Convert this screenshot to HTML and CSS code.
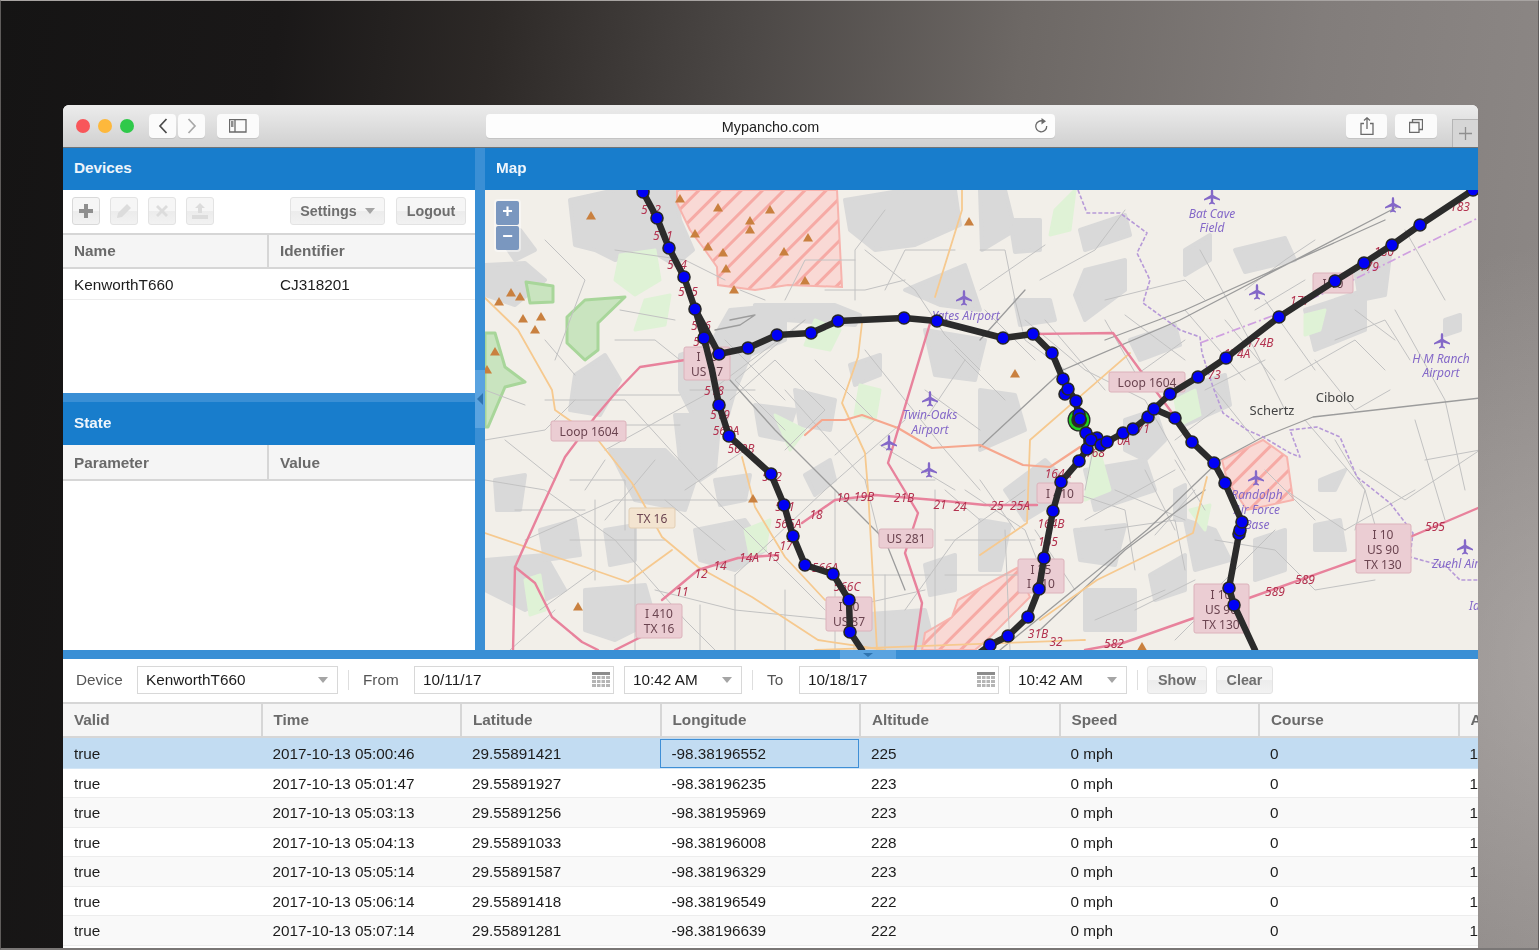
FILE: index.html
```html
<!DOCTYPE html>
<html lang="en">
<head>
<meta charset="utf-8">
<title>Mypancho.com</title>
<link rel="stylesheet" href="styles.css">
</head>
<body>
<div class="window">
  <header class="chrome">
    <div class="lights"><span class="light red"></span><span class="light yellow"></span><span class="light green"></span></div>
    <div class="nav-pair">
      <span class="cbtn nav"><svg width="12" height="18" viewBox="0 0 12 18"><path class="ico-dark" d="M9.500 2L3 9l6.500 7"/></svg></span>
      <span class="cbtn nav"><svg width="12" height="18" viewBox="0 0 12 18"><path class="ico-light" d="M2.500 2L9 9l-6.500 7"/></svg></span>
    </div>
    <span class="cbtn sidebar"><svg width="18" height="14" viewBox="0 0 18 14"><path class="ico-thin" d="M.5.5h16.500v12.500H.5zM6 .5v12.500M2 3h2.500M2 5h2.500M2 7h2.500"/></svg></span>
    <div class="url"><span class="url-text">Mypancho.com</span>
      <svg class="reload" width="14" height="16" viewBox="0 0 14 16"><path class="ico-thin" d="M9.500 3.300A5.500 5.500 0 1 0 12.700 8"/><path class="ico-fill" d="M7.500 0l4.500 3.300-4.500 3.200z"/></svg>
    </div>
    <span class="cbtn share"><svg width="14" height="18" viewBox="0 0 14 18"><path class="ico-thin" d="M4 6.500H1v11h12v-11h-3M7 12V1M4 3.500L7 .8l3 2.700"/></svg></span>
    <span class="cbtn tabs"><svg width="14" height="14" viewBox="0 0 14 14"><path class="ico-thin" d="M.5 3.500h9.500v10H.5zM3.500 3.500V.5h10v10H10"/></svg></span>
    <span class="newtab"><svg width="13" height="13" viewBox="0 0 13 13"><path class="ico-plus" d="M6.500 0v13M0 6.500h13"/></svg></span>
  </header>

  <div class="upper">
    <aside class="left">
      <section class="devices">
        <h2 class="panel-title">Devices</h2>
        <div class="dev-toolbar">
          <span class="tbtn on"><svg width="18" height="18" viewBox="0 0 18 18"><path class="g-solid" d="M7 2h4v5h5v4h-5v5H7v-5H2V7h5z"/></svg></span>
          <span class="tbtn off"><svg width="18" height="18" viewBox="0 0 18 18"><path class="g-faint" d="M12 2l4 4-9 9-5 1 1-5z"/></svg></span>
          <span class="tbtn off"><svg width="18" height="18" viewBox="0 0 18 18"><path class="g-faint" d="M5 3l4 4 4-4 2 2-4 4 4 4-2 2-4-4-4 4-2-2 4-4-4-4z"/></svg></span>
          <span class="tbtn off"><svg width="18" height="18" viewBox="0 0 18 18"><path class="g-faint" d="M9 1l5 5h-3v5H7V6H4zM1 13h16v4H1z"/></svg></span>
          <span class="tool-gap"></span>
          <span class="tbtn settings">Settings<i class="caret"></i></span>
          <span class="tbtn logout">Logout</span>
        </div>
        <div class="two-head"><span>Name</span><span>Identifier</span></div>
        <div class="two-row"><span>KenworthT660</span><span>CJ318201</span></div>
      </section>
      <div class="h-split"></div>
      <section class="state">
        <h2 class="panel-title state-title">State</h2>
        <div class="two-head state-head"><span>Parameter</span><span>Value</span></div>
      </section>
    </aside>
    <div class="v-split"><span class="v-tool"><i class="arrow-left"></i></span></div>
    <main class="map-panel">
      <h2 class="panel-title">Map</h2>
      <div class="map">
        <div class="zoom-ctl"><span class="zb">+</span><span class="zb">−</span></div>
        <svg class="map-svg" width="993" height="460" viewBox="0 0 993 460">
          <defs>
            <pattern id="hatch" width="15" height="15" patternUnits="userSpaceOnUse" patternTransform="rotate(-45)">
              <rect width="15" height="15" fill="#f9d9d5"/><rect width="15" height="3" fill="#f6aaa5"/>
            </pattern>
            <path id="plane" d="M0-8C.8-8 1.200-7 1.200-5.500V-2L8 2V3.500L1.200 1.500V5L3 6.500V7.500L0 6.800-3 7.500V6.500L-1.200 5V1.500L-8 3.500V2L-1.200-2V-5.500C-1.200-7-.8-8 0-8Z"/>
            <path id="peak" d="M0-5L5 3.500H-5Z"/>
          </defs>
          <g class="urban">
            <path d="M85 10L130 0 190 0 195 30 208 60 190 75 165 60 130 70 110 60 90 55Z"/>
            <path d="M0 75L40 73 60 90 30 115 0 105Z"/>
            <path d="M90 185L120 165 135 190 115 225 85 220Z"/>
            <path d="M195 165L225 155 245 120 300 115 300 150 265 165 250 200 240 235 210 230 195 200Z"/>
            <path d="M190 225L235 225 230 280 215 290 195 270Z"/>
            <path d="M270 115L350 115 375 125 370 135 300 130Z"/>
            <path d="M360 10L420 0 470 0 475 35 430 55 390 60 365 40Z"/>
            <path d="M310 200L350 210 345 240 315 235Z"/>
            <path d="M125 260L180 260 210 290 200 320 150 310Z"/>
            <path d="M0 370L60 365 80 400 40 420 0 400Z"/>
            <path d="M100 400L160 395 170 430 130 450 100 440Z"/>
            <path d="M210 340L260 330 280 360 250 380 215 370Z"/>
            <path d="M370 425L440 420 450 460 370 460Z"/>
            <path d="M420 100L480 75 495 120 455 115Z"/>
            <path d="M440 140L500 150 490 190 450 185Z"/>
            <path d="M495 0L520 0 530 40 497 60Z"/>
            <path d="M525 30L555 30 555 60 530 62Z"/>
            <path d="M600 80L640 70 640 100 600 130 590 105Z"/>
            <path d="M530 110L565 110 570 130 535 135Z"/>
            <path d="M595 40L640 25 645 45 600 60Z"/>
            <path d="M700 60L725 45 725 70 700 85Z"/>
            <path d="M750 60L800 48 810 70 760 82Z"/>
            <path d="M820 120L880 100 880 140 830 160Z"/>
            <path d="M870 80L905 65 900 105 875 110Z"/>
            <path d="M640 230L670 220 680 250 660 270 640 260Z"/>
            <path d="M690 200L740 185 745 215 700 235Z"/>
            <path d="M495 200L530 205 540 240 495 260Z"/>
            <path d="M520 300L560 270 590 300 540 330Z"/>
            <path d="M600 280L660 270 670 300 610 320Z"/>
            <path d="M700 330L730 340 745 370 710 380Z"/>
            <path d="M770 350L800 340 800 380 770 390Z"/>
            <path d="M830 335L855 330 860 360 830 360Z"/>
            <path d="M835 290L860 280 850 300 835 300Z"/>
            <path d="M960 130L975 125 975 140 960 145Z"/>
            <path d="M495 330L525 335 515 380 495 380Z"/>
            <path d="M600 400L650 400 650 440 600 440Z"/>
            <path d="M320 285L345 270 350 290 330 305Z"/>
            <path d="M270 215L310 220 300 250 275 245Z"/>
            <path d="M10 290L40 285 35 320 12 320Z"/>
            <path d="M55 340L90 330 95 365 60 370Z"/>
            <path d="M120 340L150 335 150 370 125 375Z"/>
            <path d="M230 290L265 285 260 310 235 315Z"/>
            <path d="M440 375L470 365 470 400 445 405Z"/>
            <path d="M365 175L395 165 395 185 370 195Z"/>
            <path d="M690 300L700 295 700 330 690 330Z"/>
            <path d="M645 150L690 135 695 155 655 170Z"/>
            <path d="M590 340L640 335 630 375 595 370Z"/>
            <path d="M665 385L700 365 700 400 670 410Z"/>
            <path d="M20 55L35 40 50 60 30 70Z"/>
          </g>
          <g class="park">
            <path d="M41 92L68 96 68 112 45 113Z"/>
            <path d="M82 127L100 110 140 107 113 133 113 160 100 170 82 153Z"/>
            <path d="M0 143L10 143 20 177 40 192 20 197 3 237 0 237Z"/>
          </g>
          <g class="leaf">
            <path d="M135 65L170 60 175 90 150 105 130 90Z"/>
            <path d="M160 110L185 105 180 135 150 140Z"/>
            <path d="M330 130L355 140 345 160 320 155Z"/>
            <path d="M375 195L395 200 390 230 370 225Z"/>
            <path d="M290 225L320 240 305 260Z"/>
            <path d="M260 340L285 330 280 360 265 365Z"/>
            <path d="M570 20L590 0 585 40 565 45Z"/>
            <path d="M690 210L710 200 715 225 695 235Z"/>
            <path d="M705 320L725 315 720 340Z"/>
            <path d="M820 125L840 120 835 140 820 145Z"/>
            <path d="M40 390L55 385 60 420 45 425Z"/>
            <path d="M610 245L625 300 600 310Z"/>
          </g>
          <path class="mil" d="M192 0L352 0 357 97 303 95 270 100 233 95 232 77 220 60 205 40 192 13Z"/>
          <path class="mil" d="M437 460L440 443 467 427 473 410 532 378 545 407 505 447 490 460Z"/>
          <path class="mil" d="M737 270L778 250 802 267 808 310 762 320 742 290Z"/>
          <g class="rd">
            <path d="M0 290L60 300 130 350 200 430 230 460M60 210L140 210 240 320 340 420M120 260L220 205 320 130M40 350L130 310 250 310 380 310M150 460L150 320M215 415V460M250 385L340 300 420 230M300 200L380 290 450 290M300 240L250 190 320 130M380 160L460 260 495 300M380 60L430 100 460 145 495 180M350 385H445M350 300V460M450 300L450 460M395 350L380 290M60 50L100 90 70 170M130 60L200 70 240 90M0 250L60 240 90 210M170 400L250 420 350 430M420 420L470 350 540 300M340 100L380 100 420 90M495 60L520 60 530 110 540 150 580 180M495 100L560 55M540 130L600 180 660 210 700 280M620 130L660 200M715 60L770 160 800 220M800 190L870 150 900 180M780 110L830 180M740 130L790 190M820 230L880 300 900 370M730 350L790 360 830 400 890 390M910 120L960 210 980 300M940 270L995 260M875 280L920 310 995 260M620 340L690 330 700 380M580 300L640 320 650 380M480 300L540 340 560 390M690 270L720 320M600 300L610 250M630 200L700 150M720 200L780 170M650 420L710 390"/>
            <path d="M85 290L140 290 140 340M110 310L110 390M30 320L100 320M85 350H180M180 310L240 360M200 300L260 260M245 210L290 170 340 220 300 260M330 170L390 230 350 265M370 110L370 60 400 20M400 100L420 60 470 60M300 110L320 70 370 70M240 150L300 210M205 200L270 200M255 100L280 110M0 200L40 215M20 250L70 290M60 150L90 185M130 150L170 150 195 170M135 120L190 130M130 205L195 205M140 235L195 235M395 255L470 300M440 200L495 240M470 160L520 210M480 170L440 230M460 300L495 330M495 290L530 340M460 350H550M460 385H540M520 340L525 460M400 385L400 460M300 400L300 460M250 385L250 460M350 420L440 400M25 460L70 420M100 300L120 270M170 270L120 330M55 420L110 380"/>
            <path d="M560 130L620 200M500 120L550 170M555 90L610 60 640 20M620 110L700 90 720 110M640 125L700 170M700 120L760 190M760 100L800 70 830 50M770 120L820 90M830 170L870 220 905 200M850 150L900 130 925 170M870 120L910 150M920 40L960 110M730 200L770 250M690 250L730 220M600 330L690 280M630 300L700 330M550 340L590 400M610 430L680 400M660 280L690 340M670 345L710 300M720 410L790 340M800 300L860 340M860 340L930 300M780 280L830 330M690 450L720 420M850 250L880 300 870 340M930 230L960 330"/>
          </g>
          <g class="rd-big">
            <path d="M495 257L578 180 695 130 912 17M735 270L778 247 828 227 995 208M515 460L662 340 735 270M495 150L540 100M245 130L270 125 255 135 230 140M245 190L290 240 340 290 400 350 420 400M555 440L640 360 720 300M620 150L700 120 900 30"/>
          </g>
          <path class="bound" d="M593 0L602 23 635 23 662 43 652 63 665 90 658 113 695 140 715 147 717 163 728 197 738 223 762 240 778 247 805 263 815 267 805 240 832 237 855 247 872 287 905 313 928 343 925 367 962 377 975 390 995 390"/>
          <path class="rail" d="M715 153L795 123 868 90 995 27"/>
          <g class="tan">
            <path d="M0 108L33 140 67 200 70 220 113 250 147 293 177 347 213 377 267 407 333 450 400 460"/>
            <path d="M257 267L270 317 300 367 340 410"/>
            <path d="M477 0L477 20 450 107"/>
            <path d="M377 133L373 167 357 213 380 263 383 300 392 460"/>
            <path d="M0 343L100 377 143 392 187 360"/>
            <path d="M495 365L542 333 545 250 645 163"/>
            <path d="M555 430L612 390 708 343 722 287"/>
            <path d="M330 460L600 450"/>
          </g>
          <g class="salmon">
            <path d="M320 245L337 230 360 230 377 225 413 238 447 258 495 255 538 275 565 277 595 257"/>
          </g>
          <g class="moto">
            <path d="M200 170L155 177 133 200 110 227 80 267 57 317 30 377 28 460"/>
            <path d="M30 377L50 393 67 427 97 452 113 460"/>
            <path d="M447 127L403 273 433 323 420 363 437 413 430 460"/>
            <path d="M177 410L213 380 253 368 293 365"/>
            <path d="M317 333L350 310 390 305 450 310 500 315 552 315"/>
            <path d="M452 131L518 148 548 144 628 143 655 180 685 220 702 247"/>
            <path d="M993 318L925 347M871 370L764 408M709 428L638 453 600 460"/>
            <path d="M130 460L160 445"/>
          </g>
          <g class="peaks">
            <use href="#peak" x="106" y="26"/><use href="#peak" x="195" y="9"/><use href="#peak" x="233" y="18"/><use href="#peak" x="285" y="20"/><use href="#peak" x="265" y="31"/><use href="#peak" x="265" y="40"/><use href="#peak" x="210" y="44"/><use href="#peak" x="323" y="48"/><use href="#peak" x="223" y="57"/><use href="#peak" x="238" y="63"/><use href="#peak" x="299" y="62"/><use href="#peak" x="241" y="79"/><use href="#peak" x="320" y="91"/><use href="#peak" x="249" y="100"/><use href="#peak" x="484" y="32"/><use href="#peak" x="14" y="112"/><use href="#peak" x="26" y="103"/><use href="#peak" x="35" y="107"/><use href="#peak" x="38" y="129"/><use href="#peak" x="56" y="127"/><use href="#peak" x="50" y="140"/><use href="#peak" x="10" y="162"/><use href="#peak" x="2" y="180"/><use href="#peak" x="268" y="309"/><use href="#peak" x="93" y="417"/><use href="#peak" x="530" y="184"/><use href="#peak" x="657" y="457"/>
          </g>
          <g class="planes">
            <use href="#plane" x="479" y="108"/><use href="#plane" x="445" y="209"/><use href="#plane" x="404" y="253"/><use href="#plane" x="444" y="280"/><use href="#plane" x="727" y="7"/><use href="#plane" x="908" y="15"/><use href="#plane" x="772" y="102"/><use href="#plane" x="957" y="151"/><use href="#plane" x="771" y="288"/><use href="#plane" x="980" y="357"/>
          </g>
          <g class="exits">
            <text x="166" y="24">512</text><text x="178" y="50">511</text><text x="192" y="79">514</text><text x="203" y="106">515</text><text x="216" y="140">516</text><text x="218" y="156">517</text><text x="229" y="205">518</text><text x="235" y="229">519</text><text x="241" y="245">560A</text><text x="256" y="263">560B</text><text x="287" y="291">562</text><text x="300" y="321">561</text><text x="303" y="338">565A</text><text x="331" y="329">18</text><text x="301" y="360">17</text><text x="288" y="371">15</text><text x="264" y="372">14A</text><text x="235" y="380">14</text><text x="216" y="388">12</text><text x="197" y="406">11</text><text x="340" y="382">566A</text><text x="362" y="401">566C</text><text x="358" y="312">19</text><text x="379" y="311">19B</text><text x="419" y="312">21B</text><text x="455" y="319">21</text><text x="475" y="321">24</text><text x="512" y="320">25</text><text x="535" y="320">25A</text><text x="573" y="288">164A</text><text x="566" y="338">164B</text><text x="563" y="356">165</text><text x="553" y="448">31B</text><text x="571" y="456">32</text><text x="629" y="458">582</text><text x="790" y="406">589</text><text x="820" y="394">589</text><text x="950" y="341">595</text><text x="610" y="267">168</text><text x="632" y="255">170A</text><text x="655" y="243">171</text><text x="726" y="189">173</text><text x="752" y="168">174A</text><text x="775" y="157">174B</text><text x="815" y="115">177</text><text x="899" y="66">180</text><text x="975" y="21">183</text><text x="884" y="81">179</text>
          </g>
          <g class="air-names">
            <text class="start" x="447" y="130">Yates Airport</text>
            <text x="445" y="229">Twin-Oaks</text><text x="445" y="244">Airport</text>
            <text x="727" y="28">Bat Cave</text><text x="727" y="42">Field</text>
            <text x="956" y="173">H M Ranch</text><text x="956" y="187">Airport</text>
            <text x="772" y="309">Randolph</text><text x="772" y="324">Air Force</text><text x="772" y="339">Base</text>
            <text class="start" x="947" y="378">Zuehl Airport</text>
            <text class="start" x="984" y="420">Id</text>
          </g>
          <g class="places">
            <text x="787" y="225">Schertz</text><text x="850" y="212">Cibolo</text>
          </g>
          <g class="shield">
            <rect x="66" y="231" width="75" height="20" rx="2"/><rect x="199" y="157" width="46" height="33" rx="2"/><rect x="394" y="339" width="54" height="19" rx="2"/><rect x="151" y="414" width="46" height="34" rx="2"/><rect x="341" y="407" width="46" height="34" rx="2"/><rect x="624" y="182" width="76" height="20" rx="2"/><rect x="828" y="83" width="40" height="20" rx="2"/><rect x="552" y="293" width="46" height="20" rx="2"/><rect x="533" y="369" width="46" height="34" rx="2"/><rect x="871" y="334" width="55" height="49" rx="2"/><rect x="709" y="394" width="55" height="49" rx="2"/>
          </g>
          <rect class="shield-tx" x="144" y="318" width="46" height="20" rx="2"/>
          <g class="shield-text">
            <text x="104" y="246">Loop 1604</text><text x="222" y="171">I 10</text><text x="222" y="186">US 87</text><text x="421" y="353">US 281</text><text x="167" y="333">TX 16</text><text x="174" y="428">I 410</text><text x="174" y="443">TX 16</text><text x="364" y="421">I 10</text><text x="364" y="436">US 87</text><text x="662" y="197">Loop 1604</text><text x="848" y="98">I 10</text><text x="575" y="308">I 410</text><text x="556" y="384">I 35</text><text x="556" y="398">I 410</text><text x="898" y="349">I 10</text><text x="898" y="364">US 90</text><text x="898" y="379">TX 130</text><text x="736" y="409">I 10</text><text x="736" y="424">US 90</text><text x="736" y="439">TX 130</text>
          </g>
          <g class="route">
            <path d="M158 2L172 28 184 58 199 87 210 119 219 148 227 180 234 215 244 246 286 284 299 315 308 346 320 375 348 384 364 410 365 442 377 460"/>
            <path d="M210 119L234 164 263 158 292 145 326 143 353 131 419 128 452 131 518 148 548 144 567 163 578 189 583 199 591 211 594 229 601 243 602 259 594 271 576 292 568 321 559 368 554 399 543 427 523 446 505 455 485 470"/>
            <path d="M601 243L612 248 622 252 638 243 648 239 663 227 669 219 685 204 713 187 741 168 794 127 850 91 879 73 907 55 935 35 988 0"/>
            <path d="M669 219L690 228 707 252 729 273 740 293 757 332 755 340 754 344 744 398 749 415 770 460"/>
          </g>
          <circle class="ring-bg" cx="594" cy="230" r="11.500"/>
          <circle class="ring" cx="594" cy="230" r="9"/>
          <g class="pts">
            <circle cx="158" cy="2" r="6"/><circle cx="172" cy="28" r="6"/><circle cx="184" cy="58" r="6"/><circle cx="199" cy="87" r="6"/><circle cx="210" cy="119" r="6"/><circle cx="219" cy="148" r="6"/><circle cx="234" cy="215" r="6"/><circle cx="244" cy="246" r="6"/><circle cx="286" cy="284" r="6"/><circle cx="299" cy="315" r="6"/><circle cx="308" cy="346" r="6"/><circle cx="320" cy="375" r="6"/><circle cx="348" cy="384" r="6"/><circle cx="364" cy="410" r="6"/><circle cx="365" cy="442" r="6"/>
            <circle cx="234" cy="164" r="6"/><circle cx="263" cy="158" r="6"/><circle cx="292" cy="145" r="6"/><circle cx="326" cy="143" r="6"/><circle cx="353" cy="131" r="6"/><circle cx="419" cy="128" r="6"/><circle cx="452" cy="131" r="6"/><circle cx="518" cy="148" r="6"/><circle cx="548" cy="144" r="6"/><circle cx="567" cy="163" r="6"/><circle cx="578" cy="189" r="6"/><circle cx="580" cy="204" r="6"/><circle cx="583" cy="199" r="6"/><circle cx="591" cy="211" r="6"/><circle cx="594" cy="224" r="6"/><circle cx="595" cy="229" r="6"/><circle cx="601" cy="243" r="6"/><circle cx="602" cy="259" r="6"/><circle cx="594" cy="271" r="6"/><circle cx="576" cy="292" r="6"/><circle cx="568" cy="321" r="6"/><circle cx="559" cy="368" r="6"/><circle cx="554" cy="399" r="6"/><circle cx="543" cy="427" r="6"/><circle cx="523" cy="446" r="6"/><circle cx="505" cy="455" r="6"/>
            <circle cx="612" cy="248" r="6"/><circle cx="606" cy="250" r="6"/><circle cx="616" cy="255" r="6"/><circle cx="622" cy="252" r="6"/><circle cx="638" cy="243" r="6"/><circle cx="648" cy="239" r="6"/><circle cx="663" cy="227" r="6"/><circle cx="669" cy="219" r="6"/><circle cx="685" cy="204" r="6"/><circle cx="713" cy="187" r="6"/><circle cx="741" cy="168" r="6"/><circle cx="794" cy="127" r="6"/><circle cx="850" cy="91" r="6"/><circle cx="879" cy="73" r="6"/><circle cx="907" cy="55" r="6"/><circle cx="935" cy="35" r="6"/><circle cx="988" cy="0" r="6"/>
            <circle cx="690" cy="228" r="6"/><circle cx="707" cy="252" r="6"/><circle cx="729" cy="273" r="6"/><circle cx="740" cy="293" r="6"/><circle cx="754" cy="344" r="6"/><circle cx="755" cy="340" r="6"/><circle cx="757" cy="332" r="6"/><circle cx="744" cy="398" r="6"/><circle cx="749" cy="415" r="6"/>
          </g>
        </svg>
      </div>
    </main>
  </div>

  <div class="b-split"><span class="b-tool"><i class="arrow-down"></i></span></div>

  <section class="report">
    <div class="report-bar">
      <span class="lbl lbl-device">Device</span>
      <span class="field f-device">KenworthT660<i class="caret"></i></span>
      <span class="sep"></span>
      <span class="lbl lbl-from">From</span>
      <span class="field f-date">10/11/17<svg class="cal" width="18" height="16" viewBox="0 0 18 16"><path class="cal-top" d="M0 0h18v3H0z"/><path class="cal-grid" d="M0 4h4v3H0zM5 4h3.500v3H5zM9.500 4H13v3H9.500zM14 4h4v3h-4zM0 8h4v3H0zM5 8h3.500v3H5zM9.500 8H13v3H9.500zM14 8h4v3h-4zM0 12h4v3H0zM5 12h3.500v3H5zM9.500 12H13v3H9.500zM14 12h4v3h-4z"/></svg></span>
      <span class="field f-time">10:42 AM<i class="caret"></i></span>
      <span class="sep"></span>
      <span class="lbl lbl-to">To</span>
      <span class="field f-date">10/18/17<svg class="cal" width="18" height="16" viewBox="0 0 18 16"><path class="cal-top" d="M0 0h18v3H0z"/><path class="cal-grid" d="M0 4h4v3H0zM5 4h3.500v3H5zM9.500 4H13v3H9.500zM14 4h4v3h-4zM0 8h4v3H0zM5 8h3.500v3H5zM9.500 8H13v3H9.500zM14 8h4v3h-4zM0 12h4v3H0zM5 12h3.500v3H5zM9.500 12H13v3H9.500zM14 12h4v3h-4z"/></svg></span>
      <span class="field f-time">10:42 AM<i class="caret"></i></span>
      <span class="sep"></span>
      <span class="tbtn b-show">Show</span>
      <span class="tbtn b-clear">Clear</span>
    </div>
    <div class="grid">
      <div class="g-row g-head"><span>Valid</span><span>Time</span><span>Latitude</span><span>Longitude</span><span>Altitude</span><span>Speed</span><span>Course</span><span>A</span></div>
      <div class="g-row g-sel"><span>true</span><span>2017-10-13 05:00:46</span><span>29.55891421</span><span class="focus">-98.38196552</span><span>225</span><span>0 mph</span><span>0</span><span>1</span></div>
      <div class="g-row"><span>true</span><span>2017-10-13 05:01:47</span><span>29.55891927</span><span>-98.38196235</span><span>223</span><span>0 mph</span><span>0</span><span>1</span></div>
      <div class="g-row"><span>true</span><span>2017-10-13 05:03:13</span><span>29.55891256</span><span>-98.38195969</span><span>223</span><span>0 mph</span><span>0</span><span>1</span></div>
      <div class="g-row"><span>true</span><span>2017-10-13 05:04:13</span><span>29.55891033</span><span>-98.38196008</span><span>228</span><span>0 mph</span><span>0</span><span>1</span></div>
      <div class="g-row"><span>true</span><span>2017-10-13 05:05:14</span><span>29.55891587</span><span>-98.38196329</span><span>223</span><span>0 mph</span><span>0</span><span>1</span></div>
      <div class="g-row"><span>true</span><span>2017-10-13 05:06:14</span><span>29.55891418</span><span>-98.38196549</span><span>222</span><span>0 mph</span><span>0</span><span>1</span></div>
      <div class="g-row"><span>true</span><span>2017-10-13 05:07:14</span><span>29.55891281</span><span>-98.38196639</span><span>222</span><span>0 mph</span><span>0</span><span>1</span></div>
    </div>
  </section>
</div>
</body>
</html>
```

FILE: styles.css
```css
* { box-sizing: border-box; }
html, body { margin: 0; }
body {
  width: 1539px;
  height: 950px;
  overflow: hidden;
  padding: 104px 0 0 62px;
  border: 1px solid #5f5c5b;
  border-top-color: #a8a4a2;
  border-bottom: 2px solid #7a7776;
  background:
    radial-gradient(ellipse 420px 420px at 1600px 660px, rgba(200,195,193,.5), rgba(200,195,193,0)),
    linear-gradient(97deg, #151414 0, #1a1818 17%, #2d2927 30%, #4b4745 45%, #6d6865 62%, #827d7b 80%, #8f8a88 100%);
  font-family: "Liberation Sans", Arial, sans-serif;
  font-size: 15.300px;
  color: #1c1c1c;
}
.window {
  width: 1415px;
  height: 843px;
  background: #fff;
  border-radius: 6px 6px 0 0;
  overflow: hidden;
  display: flex;
  flex-direction: column;
  filter: blur(.4px);
}

/* browser chrome */
.chrome {
  height: 43px;
  flex: none;
  display: flex;
  align-items: flex-start;
  padding-top: 9px;
  background: linear-gradient(#ececec, #d0d0d0);
  border-bottom: 1px solid #6f7478;
  position: relative;
}
.lights { display: flex; gap: 8px; margin: 5px 0 0 13px; width: 73px; }
.light { width: 14px; height: 14px; border-radius: 50%; }
.red { background: #f8565a; }
.yellow { background: #fdb83c; }
.green { background: #2fc94a; }
.nav-pair { display: flex; gap: 2px; }
.cbtn {
  display: flex;
  align-items: center;
  justify-content: center;
  height: 24px;
  background: #fbfbfb;
  border-radius: 4px;
  box-shadow: 0 1px 0 #c4c4c4;
}
.nav { width: 27px; }
.sidebar { width: 42px; margin-left: 12px; }
.url {
  width: 569px;
  height: 24px;
  margin-left: 227px;
  background: #fdfdfd;
  border-radius: 4px;
  box-shadow: 0 1px 0 #c4c4c4;
  display: flex;
  align-items: center;
  justify-content: center;
  position: relative;
  font-size: 14.400px;
  padding-top: 2px;
  color: #222;
}
.url-text { display: block; }
.reload { position: absolute; right: 7px; top: 4px; }
.share { width: 41px; margin-left: 291px; }
.tabs { width: 42px; margin-left: 8px; }
.newtab {
  position: absolute;
  right: 0;
  bottom: 0;
  width: 26px;
  height: 28px;
  display: flex;
  align-items: center;
  justify-content: center;
  background: #d6d6d6;
  border: 1px solid #b5b5b5;
  border-bottom: 0;
  border-right: 0;
}
svg { display: block; }
.ico-dark, .ico-light, .ico-thin, .ico-plus { fill: none; }
.ico-dark { stroke: #4a4a4a; stroke-width: 1.700; }
.ico-light { stroke: #a8a8a8; stroke-width: 1.700; }
.ico-thin { stroke: #6a6a6a; stroke-width: 1.300; }
.ico-fill { fill: #6a6a6a; }
.ico-plus { stroke: #8f8f8f; stroke-width: 1.300; }

/* upper area */
.upper { display: flex; height: 502px; flex: none; }
.left { width: 412px; flex: none; display: flex; flex-direction: column; }
.panel-title {
  margin: 0;
  height: 42px;
  line-height: 40px;
  padding-left: 11px;
  background: #187dcc;
  color: #eef5fb;
  font-size: 15.300px;
  font-weight: bold;
}
.devices { height: 245px; flex: none; }
.dev-toolbar {
  height: 43px;
  display: flex;
  align-items: center;
  padding: 0 9px 2px 9px;
  gap: 10px;
}
.tool-gap { flex: 1; }
.tbtn {
  height: 28px;
  display: flex;
  align-items: center;
  justify-content: center;
  border: 1px solid #e3e3e3;
  border-radius: 3px;
  background: linear-gradient(#f6f6f6 50%, #ececec 52%, #f2f2f2);
  color: #6e6e6e;
  font-weight: bold;
  font-size: 14.300px;
}
.on, .off { width: 28px; }
.on { border-color: #d9d9d9; }
.g-solid { fill: #8f8f8f; }
.g-faint { fill: #dcdcdc; }
.settings { width: 95px; gap: 8px; }
.logout { width: 70px; margin-left: 1px; }
.caret {
  display: block;
  width: 0;
  height: 0;
  border-left: 5px solid transparent;
  border-right: 5px solid transparent;
  border-top: 6px solid #a5a5a5;
}
.two-head {
  height: 36px;
  display: grid;
  grid-template-columns: 204px 1fr;
  background: #f5f5f5;
  border-top: 2px solid #d6d6d6;
  border-bottom: 2px solid #d6d6d6;
  color: #6a6a6a;
  font-weight: bold;
  font-size: 15.300px;
}
.two-head span { padding: 7px 0 0 11px; }
.two-head span + span { border-left: 2px solid #d6d6d6; }
.two-row {
  height: 31px;
  display: grid;
  grid-template-columns: 204px 1fr;
  border-bottom: 1px solid #ededed;
  line-height: 31px;
}
.two-row span { padding-left: 11px; }
.two-row span + span { padding-left: 13px; }
.h-split { height: 9px; flex: none; background: #3a8fd5; }
.state { flex: 1; }
.state-title { height: 43px; line-height: 42px; }
.state-head { height: 36px; border-top: 0; }
.state-head span { padding-top: 9px; }
.v-split { width: 10px; flex: none; background: #3a8fd5; display: flex; position: relative; }
.v-tool {
  position: absolute;
  top: 222px;
  left: 0;
  width: 10px;
  height: 58px;
  background: #5aa3e0;
  display: flex;
  align-items: center;
  justify-content: center;
}
.arrow-left { width: 0; height: 0; border-top: 6px solid transparent; border-bottom: 6px solid transparent; border-right: 6px solid #2f74b0; }
.map-panel { flex: 1; min-width: 0; display: flex; flex-direction: column; }
.map { height: 460px; position: relative; background: #f2efe9; overflow: hidden; }
.map-svg { position: absolute; left: 0; top: 0; }
.zoom-ctl {
  position: absolute;
  z-index: 2;
  left: 9px;
  top: 9px;
  padding: 2px;
  background: rgba(255,255,255,.45);
  border-radius: 4px;
  display: flex;
  flex-direction: column;
  gap: 1px;
}
.zb {
  width: 23px;
  height: 24px;
  background: #7a97bf;
  color: #fff;
  font-weight: bold;
  font-size: 18px;
  line-height: 21px;
  text-align: center;
  border-radius: 2px;
}

/* map drawing */
.urban path { fill: #d9d9d9; stroke: #d9d9d9; stroke-width: 4; stroke-linejoin: round; }
.park path { fill: #c9e4bf; stroke: #a8d69a; stroke-width: 3; stroke-linejoin: round; }
.leaf path { fill: #dff2d6; stroke: #dff2d6; stroke-width: 3; stroke-linejoin: round; }
.mil { fill: url(#hatch); stroke: #f7b3ad; stroke-width: 2; }
.rd path, .rd-big path, .bound, .rail, .tan path, .salmon path, .moto path, .route path { fill: none; stroke-linejoin: round; stroke-linecap: round; }
.rd path { stroke: #c2c2c2; stroke-width: 1; }
.rd-big path { stroke: #9c9c9c; stroke-width: 1.300; }
.bound { stroke: #b79ad8; stroke-width: 1.600; stroke-dasharray: 4 2; stroke-linecap: butt; }
.rail { stroke: #cfa0e0; stroke-width: 1.700; stroke-dasharray: 9 3 2 3; stroke-linecap: butt; }
.tan path { stroke: #f6c98f; stroke-width: 1.800; }
.salmon path { stroke: #f6a78e; stroke-width: 2.200; }
.moto path { stroke: #e8829c; stroke-width: 2.400; }
.peaks { fill: #c9803f; }
.planes { fill: #8468c8; }
.exits text { font: italic 12px "Noto Sans", "Open Sans", sans-serif; fill: #b3324f; text-anchor: middle; }
.air-names text { font: italic 12px "Noto Sans", "Open Sans", sans-serif; fill: #8468c8; text-anchor: middle; }
.air-names .start { text-anchor: start; }
.places text { font: 13px "Noto Sans", "Open Sans", sans-serif; fill: #444; text-anchor: middle; }
.shield rect { fill: #ebcdd3; stroke: #dcb2bb; }
.shield-tx { fill: #f3e4d0; stroke: #e3cfb4; }
.shield-text text { font: 12px "Noto Sans", "Open Sans", sans-serif; fill: #6b4450; text-anchor: middle; }
.route path { stroke: #2b2b2b; stroke-width: 6.500; }
.ring-bg { fill: #2b2b2b; }
.ring { fill: none; stroke: #1fd31f; stroke-width: 2.500; }
.pts circle { fill: #0000f5; stroke: #262626; stroke-width: 1.600; }

/* lower area */
.b-split { height: 9px; flex: none; background: #3a8fd5; position: relative; }
.b-tool {
  position: absolute;
  left: 777px;
  top: 0;
  width: 56px;
  height: 9px;
  background: #5aa3e0;
  display: flex;
  align-items: center;
  justify-content: center;
}
.arrow-down { width: 0; height: 0; border-left: 5px solid transparent; border-right: 5px solid transparent; border-top: 4px solid #2f74b0; }
.report { flex: 1; min-height: 0; overflow: hidden; display: flex; flex-direction: column; }
.report-bar {
  height: 43px;
  flex: none;
  display: flex;
  align-items: center;
  padding-left: 13px;
  padding-bottom: 1px;
}
.lbl { color: #555; font-size: 15.300px; }
.lbl-device { width: 61px; }
.lbl-from { width: 51px; }
.lbl-to { width: 32px; }
.field {
  height: 28px;
  display: flex;
  align-items: center;
  justify-content: space-between;
  padding: 0 9px 0 8px;
  border: 1px solid #d8d8d8;
}
.f-device { width: 201px; }
.f-date { width: 200px; padding-right: 3px; margin-right: 10px; }
.f-time { width: 118px; }
.cal-top { fill: #8c8c8c; }
.cal-grid { fill: #b5b5b5; }
.sep { width: 1px; height: 20px; background: #dedede; margin: 0 14px 0 10px; }
.b-show { width: 60px; margin-left: -5px; }
.b-clear { width: 57px; margin-left: 9px; }
.grid { flex: 1; min-height: 0; overflow: hidden; }
.g-row {
  display: grid;
  grid-template-columns: 197.500px repeat(6, 199.500px) 1fr;
  height: 29.500px;
  line-height: 29px;
  border-bottom: 1px solid #ededed;
}
.g-row:nth-child(even) { background: #f9f9f9; }
.g-row span { padding-left: 11px; white-space: nowrap; }
.g-row span + span { padding-left: 12px; }
.g-head {
  height: 36px;
  background: #f5f5f5;
  border-top: 2px solid #d6d6d6;
  border-bottom: 2px solid #d6d6d6;
  color: #6a6a6a;
  font-weight: bold;
  line-height: 32px;
}
.g-head span + span { border-left: 2px solid #d6d6d6; padding-left: 11px; }
.g-row.g-sel { background: #c2dcf2; height: 30.500px; border-bottom: 1px solid #d3e6f6; line-height: 31px; }
.g-sel .focus { border: 1px solid #3f8fd6; line-height: 28px; padding-left: 11px; height: 29px; margin-top: 1px; }
```
